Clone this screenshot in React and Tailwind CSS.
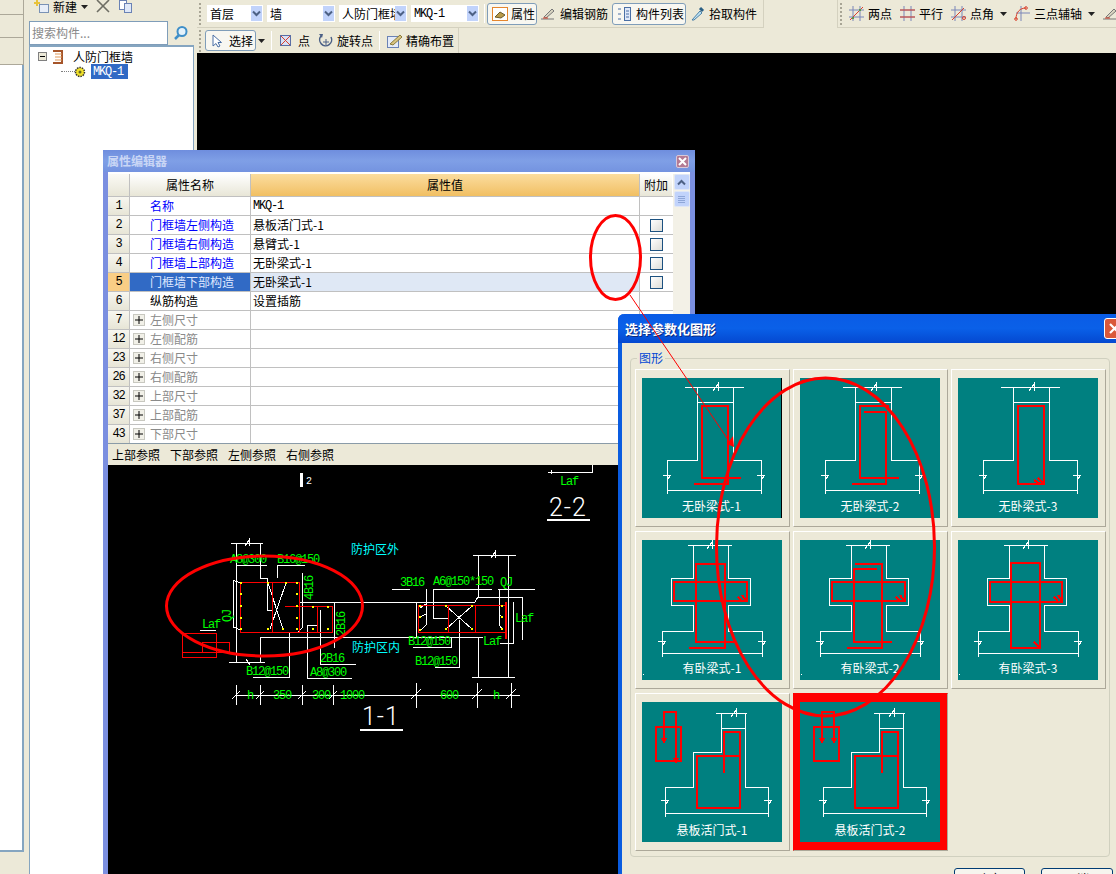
import React from "react";

const rows = [
  { no: "1", name: "名称", value: "MKQ-1", mono: true, blue: true },
  { no: "2", name: "门框墙左侧构造", value: "悬板活门式-1", blue: true, check: true },
  { no: "3", name: "门框墙右侧构造", value: "悬臂式-1", blue: true, check: true },
  { no: "4", name: "门框墙上部构造", value: "无卧梁式-1", blue: true, check: true },
  { no: "5", name: "门框墙下部构造", value: "无卧梁式-1", selected: true, check: true },
  { no: "6", name: "纵筋构造", value: "设置插筋" },
  { no: "7", name: "左侧尺寸", group: true },
  { no: "12", name: "左侧配筋", group: true },
  { no: "23", name: "右侧尺寸", group: true },
  { no: "26", name: "右侧配筋", group: true },
  { no: "32", name: "上部尺寸", group: true },
  { no: "37", name: "上部配筋", group: true },
  { no: "43", name: "下部尺寸", group: true },
];

const Grip = () => (
  <div className="flex flex-col gap-[2px] w-[3px]">
    {[0, 1, 2, 3, 4, 5].map((i) => (
      <div key={i} className="w-[2px] h-[2px] bg-[#a8a595]" />
    ))}
  </div>
);

const Sep = () => <div className="w-px h-[19px] bg-[#c5c2b0] border-r border-white" />;

const Combo = ({ label, width, mono }) => (
  <div className={`${width} h-[17px] bg-white flex items-center justify-between pl-[2px] pr-px`}>
    <span className={mono ? "font-['Liberation_Mono'] text-[12px] tracking-[-1.2px] pl-px" : "pl-px leading-[16px] whitespace-nowrap overflow-hidden"}>{label}</span>
    <span className="w-[11px] h-[15px] shrink-0 bg-[#c1d3fb] flex items-center justify-center">
      <svg width="9" height="7" viewBox="0 0 9 7"><path d="M1 1.5L4.5 5L8 1.5" fill="none" stroke="#4d6185" strokeWidth="2" /></svg>
    </span>
  </div>
);

const DropArrow = () => (
  <svg width="7" height="4" viewBox="0 0 7 4" className="shrink-0"><path d="M0 0H7L3.5 4Z" fill="#222" /></svg>
);

// little toolbar drawings
const AxisIcon = ({ kind }) => (
  <svg width="15" height="15" viewBox="0 0 15 15" className="shrink-0" fill="none">
    <path d="M4 0V15M11 0V15M0 4H15M0 11H15" stroke="#7a86b8" />
    {kind === "two" && <path d="M1 14L14 1" stroke="#d8402c" />}
    {kind === "two" && <path d="M3 11h2v2H3zM10 3h2v2h-2z" fill="#5a9a4a" />}
    {kind === "par" && <path d="M0 4H15M0 11H15" stroke="#d8402c" />}
    {kind === "ang" && <path d="M1 14L13 2" stroke="#d8402c" />}
    {kind === "ang" && <circle cx="13" cy="12" r="1.5" stroke="#d8402c" />}
  </svg>
);

const ArcIcon = () => (
  <svg width="16" height="15" viewBox="0 0 16 15" className="shrink-0" fill="none">
    <path d="M7 0V15M2 7H16" stroke="#7a86b8" />
    <path d="M2 13C2 6 6 2 12 2" stroke="#d8402c" />
    <circle cx="2" cy="13" r="1.3" stroke="#d8402c" />
    <circle cx="12" cy="2" r="1.3" stroke="#d8402c" />
  </svg>
);

const Pencil = () => (
  <svg width="15" height="15" viewBox="0 0 15 15" className="shrink-0" fill="none">
    <path d="M1 13H14" stroke="#777" />
    <path d="M4 11L12 3L14 5L6 12Z" fill="#d8d4c0" stroke="#777" />
    <path d="M3 12H8" stroke="#d8402c" />
  </svg>
);

const Top = () => (
  <div className="flex-1 h-[53px] flex flex-col">
    <div className="h-[28px] flex items-start">
      <div className="flex items-center h-[28px] w-[567px] border-r border-b border-[#d4d1bf] pl-[2px]">
        <Grip />
        <div className="flex items-center gap-[4px] ml-[5px]">
          <Combo label="首层" width="w-[56px]" />
          <Combo label="墙" width="w-[68px]" />
          <Combo label="人防门框墙" width="w-[68px]" />
          <Combo label="MKQ-1" width="w-[68px]" mono />
        </div>
        <div className="ml-[5px]"><Sep /></div>
        <div className="ml-[2px] h-[22px] w-[50px] rounded-[3px] border border-[#7f9db9] bg-[#f8f7f1] flex items-center gap-[3px] pl-[4px]">
          <svg width="16" height="14" viewBox="0 0 16 14" className="shrink-0" fill="none">
            <rect x="0.5" y="0.5" width="15" height="13" fill="#fff" stroke="#e5862e" />
            <path d="M3 10L8 5L13 8L9 11Z" fill="#b89a4a" stroke="#6b5a2a" />
          </svg>
          属性
        </div>
        <div className="ml-[3px] flex items-center gap-[5px]"><Pencil />编辑钢筋</div>
        <div className="ml-[4px] h-[22px] w-[74px] rounded-[3px] border border-[#7f9db9] bg-[#f8f7f1] flex items-center gap-[5px] pl-[4px]">
          <svg width="14" height="14" viewBox="0 0 14 14" className="shrink-0" fill="none">
            <rect x="7.5" y="0.5" width="6" height="13" fill="#dfe8f8" stroke="#4a6fa5" />
            <path d="M1 2h3M1 7h3M1 12h3M9 4h3M9 7h3M9 10h3" stroke="#4a6fa5" />
          </svg>
          构件列表
        </div>
        <div className="ml-[5px] flex items-center gap-[4px]">
          <svg width="14" height="15" viewBox="0 0 14 15" className="shrink-0" fill="none">
            <path d="M1 14L9 5L11 7L3 14Z" fill="#bfe3f5" stroke="#4a7fa5" />
            <path d="M9 2L12 5" stroke="#2a5f85" strokeWidth="3" />
          </svg>
          拾取构件
        </div>
      </div>
      <div className="flex items-center h-[28px] flex-1 ml-[73px] border-l border-b border-[#d4d1bf] pl-[2px] whitespace-nowrap overflow-hidden">
        <Grip />
        <div className="ml-[6px] flex items-center gap-[4px]"><AxisIcon kind="two" />两点</div>
        <div className="ml-[8px] flex items-center gap-[4px]"><AxisIcon kind="par" />平行</div>
        <div className="ml-[8px] flex items-center gap-[4px]"><AxisIcon kind="ang" />点角</div>
        <div className="ml-[6px]"><DropArrow /></div>
        <div className="ml-[7px] flex items-center gap-[4px]"><ArcIcon />三点辅轴</div>
        <div className="ml-[6px]"><DropArrow /></div>
        <div className="ml-[7px]"><Pencil /></div>
      </div>
    </div>
    <div className="h-[25px] w-[262px] flex items-center border-r border-[#d4d1bf] pl-[2px]">
      <Grip />
      <div className="ml-[3px] h-[21px] w-[51px] rounded-[3px] border border-[#7f9db9] bg-[#f8f7f1] flex items-center gap-[7px] pl-[6px]">
        <svg width="10" height="14" viewBox="0 0 10 14" className="shrink-0"><path d="M1 1V12L4 9.5L6 13L8 12L6 8.5H9.5Z" fill="#fff" stroke="#4a6fa5" /></svg>
        选择
      </div>
      <div className="ml-[2px]"><DropArrow /></div>
      <div className="ml-[6px]"><Sep /></div>
      <div className="ml-[8px] flex items-center gap-[7px]">
        <svg width="11" height="11" viewBox="0 0 11 11" className="shrink-0" fill="none">
          <rect x="0.5" y="0.5" width="10" height="10" fill="#d8e0f4" stroke="#5a6ea5" />
          <path d="M1 1L10 10M10 1L1 10" stroke="#d8402c" />
        </svg>
        点
      </div>
      <div className="ml-[8px] flex items-center gap-[4px]">
        <svg width="15" height="15" viewBox="0 0 15 15" className="shrink-0" fill="none">
          <path d="M3 3A6 6 0 1 0 13 4" stroke="#4a5f85" strokeWidth="1.5" />
          <path d="M1 1L5 1L4 5Z" fill="#4a5f85" />
          <path d="M5 9H11M8 6V12" stroke="#4a5f85" />
        </svg>
        旋转点
      </div>
      <div className="ml-[6px]"><Sep /></div>
      <div className="ml-[7px] flex items-center gap-[4px]">
        <svg width="15" height="15" viewBox="0 0 15 15" className="shrink-0" fill="none">
          <rect x="0.5" y="3.5" width="11" height="11" fill="#e4ebf8" stroke="#6a82b5" />
          <path d="M3 11L13 2L15 4L6 12Z" fill="#d8c480" stroke="#8a7a3a" />
        </svg>
        精确布置
      </div>
    </div>
  </div>
);

const Side = () => (
  <div className="w-[173px] h-full flex flex-col pl-[5px] shrink-0">
    <div className="h-[20px] flex items-start gap-[4px] pl-[4px]">
      <svg width="16" height="13" viewBox="0 0 16 13" className="shrink-0" fill="none">
        <rect x="6.5" y="4.5" width="9" height="8" fill="#e8eef8" stroke="#7a92b5" />
        <path d="M1 3H7M4 0V6" stroke="#e8c23a" strokeWidth="2" />
      </svg>
      <span className="leading-[13px]">新建</span>
      <span className="mt-[5px]"><DropArrow /></span>
      <svg width="14" height="13" viewBox="0 0 14 13" className="ml-[4px] shrink-0"><path d="M1 0L13 12M13 0L1 12" stroke="#6e6e64" strokeWidth="1.6" /></svg>
      <svg width="13" height="13" viewBox="0 0 13 13" className="ml-[5px] shrink-0" fill="none">
        <rect x="0.5" y="0.5" width="7" height="9" fill="#fff" stroke="#6a82b5" />
        <rect x="5.5" y="3.5" width="7" height="9" fill="#dfe8f8" stroke="#6a82b5" />
      </svg>
    </div>
    <div className="flex items-center gap-[5px] h-[25px]">
      <div className="w-[139px] h-[24px] bg-white border border-[#7f9db9] flex items-center pl-[2px] text-[#8a8a8a]">搜索构件...</div>
      <svg width="16" height="16" viewBox="0 0 16 16" className="shrink-0" fill="none">
        <circle cx="9" cy="6.5" r="4.5" fill="#e4f2fb" stroke="#3f8fc8" strokeWidth="2" />
        <path d="M6 10L2 14" stroke="#3f8fc8" strokeWidth="2.5" />
      </svg>
    </div>
    <div className="flex-1 w-[165px] bg-white border-l border-r border-t-2 border-[#85a5c0] pt-[2px]">
      <div className="h-[15px] flex items-center pl-[8px] gap-[5px]">
        <span className="w-[9px] h-[9px] border border-[#808080] bg-[#ece9d8] flex items-center justify-center">
          <span className="w-[5px] h-px bg-black" />
        </span>
        <svg width="12" height="14" viewBox="0 0 12 14" className="shrink-0" fill="none">
          <path d="M1 1H10V13H1" stroke="#a5552a" strokeWidth="2" />
          <path d="M3 4H10M3 7H10M3 10H10" stroke="#e09a5a" strokeWidth="1.2" />
        </svg>
        <span className="ml-[4px]">人防门框墙</span>
      </div>
      <div className="h-[17px] flex items-center pl-[31px] -mt-px">
        <span className="w-[14px] h-px border-t border-dotted border-[#808080]" />
        <svg width="12" height="12" viewBox="0 0 12 12" className="-ml-[1px] shrink-0">
          <circle cx="6" cy="6" r="4.5" fill="#f2e22a" stroke="#333" strokeWidth="1.5" strokeDasharray="1.5 1" />
          <circle cx="6" cy="6" r="1.5" fill="#6a6a20" />
        </svg>
        <span className="ml-[5px] w-[37px] h-[15px] bg-[#316ac5] text-white font-['Liberation_Mono'] text-[12px] tracking-[-1.2px] flex items-center pl-[2px]">MKQ-1</span>
      </div>
    </div>
  </div>
);

const Check = () => (
  <span className="block w-[13px] h-[13px] border border-[#1c5180] bg-gradient-to-br from-white to-[#dcdcd7]" />
);

const Row = ({ row }) => (
  <div className="flex h-[19px] border-b border-[#c0c0c0]">
    <div className={`w-[22px] flex items-center justify-center border-r border-[#c0c0c0] font-['Liberation_Mono'] text-[12px] tracking-[-1.2px] ${row.selected ? "bg-[#f9ce85]" : "bg-gradient-to-b from-[#f7f6ef] to-[#e7e5d6]"}`}>
      {row.no}
    </div>
    <div className={`w-[121px] flex items-center border-r border-[#c0c0c0] ${row.selected ? "bg-[#316ac5] text-[#dfe8ff] pl-[20px]" : row.blue ? "text-[#0000ff] pl-[20px]" : row.group ? "text-[#8a8a8a] pl-[3px]" : "pl-[20px]"}`}>
      {row.group && (
        <span className="w-[12px] h-[12px] mr-[5px] border border-[#c8c8c0] bg-[#f1f0e8] flex items-center justify-center text-black">
          <svg width="8" height="8" viewBox="0 0 8 8"><path d="M4 0V8M0 4H8" stroke="#000" /></svg>
        </span>
      )}
      {row.name}
    </div>
    <div className={`w-[389px] flex items-center pl-[2px] border-r border-[#c0c0c0] ${row.selected ? "bg-[#dfe8f5]" : ""} ${row.mono ? "font-['Liberation_Mono'] text-[12px] tracking-[-1.2px]" : ""}`}>
      {row.value}
    </div>
    <div className="w-[32px] flex items-center justify-center">{row.check && <Check />}</div>
  </div>
);

const Props = () => (
  <div className="absolute left-[103px] top-[150px] w-[592px] h-[730px] bg-[#7b8fe0] rounded-t-[3px] pl-[5px] pr-[5px] flex flex-col">
    <div className="h-[22px] shrink-0 -ml-[5px] -mr-[5px] px-[4px] bg-gradient-to-b from-[#6f8ede] via-[#7f9fe6] to-[#7493e0] flex items-center justify-between">
      <span className="text-[#c9d6f5] font-bold">属性编辑器</span>
      <span className="w-[13px] h-[13px] rounded-[2px] bg-[#b47a94] border border-[#d8c8d8] flex items-center justify-center mr-[2px]">
        <svg width="9" height="9" viewBox="0 0 9 9"><path d="M1 1L8 8M8 1L1 8" stroke="#fff" strokeWidth="2" /></svg>
      </span>
    </div>
    <div className="bg-white h-[271px] shrink-0 flex pt-[2px]">
      <div className="w-[565px]">
        <div className="flex h-[23px] border-b border-[#c0c0c0]">
          <div className="w-[22px] bg-gradient-to-b from-[#fbfaf5] to-[#e7e5d6] border-r border-[#c0c0c0]" />
          <div className="w-[121px] bg-gradient-to-b from-white to-[#e8e6d7] border-r border-[#c0c0c0] flex items-center justify-center">属性名称</div>
          <div className="w-[389px] bg-gradient-to-b from-[#fbdd9e] to-[#f1bf62] border-r border-[#c0c0c0] flex items-center justify-center">属性值</div>
          <div className="w-[32px] bg-gradient-to-b from-white to-[#e8e6d7] flex items-center justify-center">附加</div>
        </div>
        {rows.map((row) => (
          <Row key={row.no} row={row} />
        ))}
      </div>
      <div className="w-[17px] bg-[#f3f1e7] flex flex-col items-center gap-px">
        <div className="w-[16px] h-[16px] rounded-[2px] bg-[#c1d3fb] border border-[#dfe6f5] flex items-center justify-center">
          <svg width="9" height="7" viewBox="0 0 9 7"><path d="M1 5.5L4.5 2L8 5.5" fill="none" stroke="#4d6185" strokeWidth="2" /></svg>
        </div>
        <div className="w-[16px] h-[16px] rounded-[2px] bg-[#c1d3fb] border border-[#dfe6f5] flex flex-col items-center justify-center gap-px">
          <span className="w-[7px] h-px bg-[#8ea6d8]" />
          <span className="w-[7px] h-px bg-[#8ea6d8]" />
          <span className="w-[7px] h-px bg-[#8ea6d8]" />
          <span className="w-[7px] h-px bg-[#8ea6d8]" />
        </div>
      </div>
    </div>
    <div className="h-[22px] shrink-0 bg-[#ece9d8] border-t border-[#8a9ba8] flex items-center gap-[10px] pl-[4px]">
      <span>上部参照</span>
      <span>下部参照</span>
      <span>左侧参照</span>
      <span>右侧参照</span>
    </div>
    <div className="flex-1 bg-black overflow-hidden">
      <Cad />
    </div>
  </div>
);

const cadWhite =
  "M231 543H263M245 546L249 540V546M236 543V662M260 543V578H267V610H272M236 565H267M277 578V565H305M302 573V628L298 632M233 580L240 583M233 580V627L241 630M268 583L283 629M286 583L270 629M229 662H265M246 659L250 665M260 637V662M260 637H410M289 632V677H253M307 625V678H352M307 625H317M320 610V664H356M300 602H410M334 602V648M392 589H410M200 630H216" +
  "M236 695H520M236 685V705M232 699L240 691M260 685V705M256 699L264 691M302 685V705M298 699L306 691M333 685V705M329 699L337 691M416 683V708M411 699L421 689M477 683V708M472 699L482 689M511 683V708M506 699L516 689" +
  "M473 555H516M491 558L495 552V558M478 555V597M508 555V677M433 589H492M498 589H535M426 589V625L421 630M426 604L420 608M426 614L420 617M433 589V618H449M400 602H475L478 597H522V640M416 602V637M400 637H483M478 637V677M472 677H515M500 643H513V602M413 647H451V637M435 667H459V620M446 606L472 629M472 606L446 629M499 589V625L503 630M499 605L502 606M499 614L502 617M548 472H592V465M551 470V474";

const CadText = ({ x, y, children, rotate, fill = "#00ff00" }) => (
  <text
    x={x}
    y={y}
    fill={fill}
    transform={rotate ? `rotate(-90 ${x} ${y})` : undefined}
    className="font-['Liberation_Mono'] text-[12px] tracking-[-1.2px]"
  >
    {children}
  </text>
);

const Dots = ({ points }) =>
  points.map(([x, y]) => <rect key={`${x}-${y}`} x={x - 1} y={y - 1} width="2" height="2" fill="#ffff00" />);

// drawing sits in page coordinates so it can be read against the screenshot
const Cad = () => (
  <svg width="510" height="409" viewBox="108 465 510 409" className="block" shapeRendering="crispEdges">
    <path d={cadWhite} fill="none" stroke="#fff" />
    <path d="M240 582H299V632H240ZM272 582V632M285 606H332V632M317 606V632M299 632H333M418 605H506V632H418ZM448 605V632M475 605V632" fill="none" stroke="#ff0000" />
    <path d="M506 602V639" stroke="#ff0000" strokeWidth="1.5" />
    <path d="M182 633H216V657H182ZM202 642H229V652H202ZM182 652H216" fill="none" stroke="#ff0000" />
    <Dots points={[[241,583],[241,594],[241,606],[241,618],[241,629],[297,583],[297,594],[297,606],[297,618],[297,629],[268,583],[286,583],[268,629],[283,629],[313,607],[328,607],[313,629],[328,629],[420,606],[420,617],[420,630],[446,606],[446,629],[472,606],[472,629],[502,606],[502,617],[502,629]]} />
    <rect x="300" y="473" width="3" height="14" fill="#fff" />
    <text x="306" y="484" fill="#fff" className="font-['Liberation_Mono'] text-[10px]">2</text>
    <CadText x={230} y={563}>A8@300</CadText>
    <CadText x={277} y={563}>B16@150</CadText>
    <CadText x={313} y={600} rotate>4B16</CadText>
    <CadText x={231} y={622} rotate>QJ</CadText>
    <CadText x={202} y={628}>Laf</CadText>
    <CadText x={345} y={636} rotate>2B16</CadText>
    <CadText x={246} y={675}>B12@150</CadText>
    <CadText x={320} y={662}>2B16</CadText>
    <CadText x={310} y={676}>A8@300</CadText>
    <CadText x={247} y={699}>h</CadText>
    <CadText x={273} y={699}>350</CadText>
    <CadText x={312} y={699}>300</CadText>
    <CadText x={340} y={699}>1000</CadText>
    <CadText x={400} y={586}>3B16</CadText>
    <CadText x={433} y={585}>A6@150*150</CadText>
    <CadText x={500} y={586}>QJ</CadText>
    <CadText x={515} y={622}>Laf</CadText>
    <CadText x={483} y={645}>Laf</CadText>
    <CadText x={408} y={645}>B12@150</CadText>
    <CadText x={415} y={665}>B12@150</CadText>
    <CadText x={440} y={699}>600</CadText>
    <CadText x={493} y={699}>h</CadText>
    <CadText x={560} y={485}>Laf</CadText>
    <text x="351" y="554" fill="#00ffff" className="text-[12px]">防护区外</text>
    <text x="352" y="652" fill="#00ffff" className="text-[12px]">防护区内</text>
    <text x="362" y="725" fill="#fff" className="font-['Roboto'] text-[25px] font-light tracking-[1px]">1-1</text>
    <path d="M360 729.5H403" stroke="#fff" strokeWidth="2" />
    <text x="549" y="516" fill="#fff" className="font-['Roboto'] text-[25px] font-light tracking-[1px]">2-2</text>
    <path d="M547 520H590" stroke="#fff" strokeWidth="2" />
  </svg>
);

const breakH = (x, y) => `M${x - 3} ${y + 4}L${x + 2} ${y - 3}V${y + 4}`;
const breakV = (x, y) => `M${x - 4} ${y - 1}H${x + 4}L${x} ${y + 4}`;

const frameOne = `M43 9H102${breakH(74, 9)}M55 9V82H25V116M91 9V82H119V116M55 24H91M25 112H119${breakV(25, 98)}${breakV(119, 98)}`;
const frameTwo = `M46 5H90${breakH(68, 5)}M51 5V38H29V65H51V91H20V117M86 5V38H108V65H86V91H120V117M20 113H120${breakV(20, 102)}${breakV(120, 102)}`;
const frameThree = `M74 11H105${breakH(92, 11)}M79 11V50H51V85H23V115M103 11V85H126V115M79 26H103M23 111H126${breakV(23, 99)}${breakV(126, 99)}`;
const hook1 = "M80 100L86 106M76 102L82 106";
const hook2 = "M100 55L104 61M96 57L100 61";

const tiles = [
  { label: "无卧梁式-1", frame: frameOne, bar: "M52 106H86V28H60V100H99", edge: true },
  { label: "无卧梁式-2", frame: frameOne, bar: "M64 34H86V106H52M89 28H60V100H99" },
  { label: "无卧梁式-3", frame: frameOne, bar: `M60 28H86V106H60Z${hook1}` },
  { label: "有卧梁式-1", frame: frameTwo, bar: `M47 108H83V24H54V102H92M32 42H105V61H32Z${hook2}`, dot: true },
  { label: "有卧梁式-2", frame: frameTwo, bar: `M55 24H82V108H47M77 29H54V102H92M32 42H105V61H32Z${hook2}`, dot: true },
  { label: "有卧梁式-3", frame: frameTwo, bar: `M53 23H82V108H53ZM32 42H104V62H32Z${hook2}M76 102L82 108`, dot: true },
  { label: "悬板活门式-1", frame: frameThree, bar: "M55 54H98V106H55ZM82 71V30H98V54M14 25H39V59H14ZM22 39V10H34V59M20 36L22 40L24 36M32 56L34 60L36 56" },
  { label: "悬板活门式-2", frame: frameThree, bar: "M55 54H98V106H55ZM82 71V30H98V54M14 25H39V59H14ZM22 39V10H34V39M20 36L22 40L24 36M32 36L34 40L36 36", selected: true },
];

const Tile = ({ tile }) => (
  <div className={`h-[158px] pt-[8px] pl-[6px] border-r border-b border-[#aca899] border-l border-t ${tile.selected ? "bg-[#ff0000] border-l-[#ff0000] border-t-[#ff0000]" : "bg-[#ece9d8] border-l-white border-t-white"}`}>
    <div className={`w-[140px] h-[140px] bg-[#008080] relative ${tile.edge ? "border-r border-black" : ""}`}>
      <svg width="140" height="140" viewBox="0 0 140 140" className="block" shapeRendering="crispEdges">
        <path d={tile.frame} fill="none" stroke="#fff" />
        <path d={tile.bar} fill="none" stroke="#ff0000" strokeWidth="2" />
        {tile.dot && <rect x="1" y="134" width="1" height="1" fill="#fff" />}
      </svg>
      <span className="absolute left-0 right-0 top-[121px] text-center text-white leading-[14px]">{tile.label}</span>
    </div>
  </div>
);

const Dialog = () => (
  <div className="absolute left-[618px] top-[314px] w-[510px] h-[570px] bg-[#ece9d8] border-l-[4px] border-[#0a5ce0] rounded-tl-[6px] flex flex-col">
    <div className="h-[29px] shrink-0 -ml-[4px] pl-[7px] rounded-tl-[6px] bg-gradient-to-b from-[#0a5ce6] via-[#0a60e8] to-[#0548d0] flex items-center">
      <span className="text-white font-bold text-[13px] [text-shadow:1px_1px_0_#0a2a80]">选择参数化图形</span>
      <span className="absolute left-[482px] top-[4px] w-[21px] h-[21px] rounded-[3px] bg-[#d9583a] border border-white flex items-center justify-center">
        <svg width="11" height="11" viewBox="0 0 11 11"><path d="M1 1L10 10M10 1L1 10" stroke="#fff" strokeWidth="2.2" /></svg>
      </span>
    </div>
    <div className="relative ml-[8px] mt-[15px] w-[480px] h-[499px] shrink-0 border border-[#d0d0bf] rounded-[4px] pt-[10px] pl-[4px]">
      <span className="absolute left-[6px] -top-[8px] bg-[#ece9d8] px-[2px] text-[#0046d5] leading-[14px]">图形</span>
      <div className="grid grid-cols-[155px_155px_155px] gap-x-[3px] gap-y-[4px]">
        {tiles.map((tile) => (
          <Tile key={tile.label} tile={tile} />
        ))}
      </div>
    </div>
    <div className="flex gap-[16px] mt-[11px] ml-[332px]">
      <div className="w-[71px] h-[22px] rounded-[3px] border border-[#003c74] bg-[#f6f5ee] flex items-center justify-center">确定</div>
      <div className="w-[72px] h-[22px] rounded-[3px] border border-[#003c74] bg-[#f6f5ee] flex items-center justify-center">取消</div>
    </div>
  </div>
);

// the hand-drawn red marks lie over everything
const Marks = () => (
  <svg width="1116" height="874" viewBox="0 0 1116 874" className="absolute left-0 top-0 pointer-events-none" fill="none">
    <ellipse cx="615.5" cy="257.5" rx="25" ry="42" stroke="#ff0000" strokeWidth="3" />
    <ellipse cx="825.5" cy="547" rx="109" ry="169" stroke="#ff0000" strokeWidth="3" />
    <ellipse cx="264.5" cy="606" rx="98" ry="50" stroke="#ff0000" strokeWidth="3" />
    <path d="M630 295L729 441" stroke="#ff0000" />
    <path d="M733 436L727 444L734 447Z" fill="#ff0000" />
  </svg>
);

const App = () => {
  return (
    <div className="relative w-[1116px] h-[874px] overflow-hidden bg-black text-black text-[12px] leading-none font-['Noto_Sans_CJK_SC',sans-serif]">
      <div className="flex h-full">
        <div className="w-[24px] h-full bg-[#ece9d8] shrink-0 flex flex-col">
          <div className="h-[15px] border-b border-r border-[#aca899]" />
          <div className="h-[23px] border-b border-r border-[#aca899]" />
          <div className="h-[27px] border-b border-r border-[#aca899]" />
          <div className="h-[787px] bg-white border-r-2 border-b-2 border-[#85a5c0]" />
        </div>
        <div className="bg-[#ece9d8] h-full"><Side /></div>
        <div className="flex-1 flex flex-col">
          <div className="bg-[#ece9d8] h-[53px] flex"><Top /></div>
        </div>
      </div>
      <Props />
      <Dialog />
      <Marks />
    </div>
  );
};

export default App;
